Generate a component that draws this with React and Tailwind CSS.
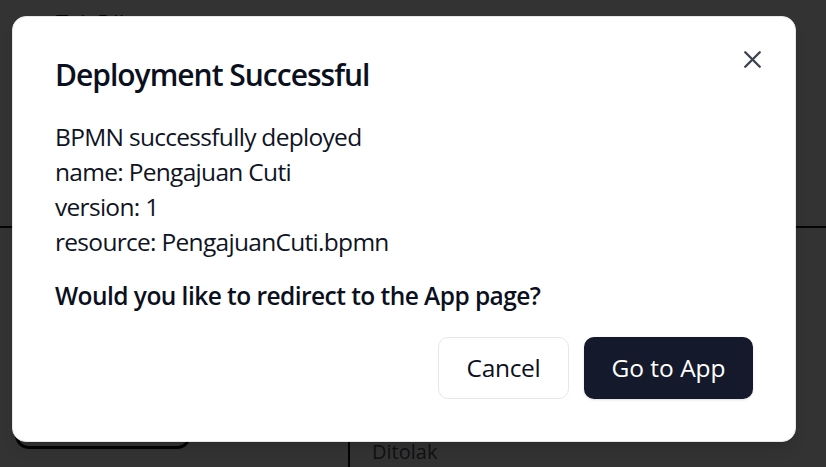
import React from "react";

function XIcon({ className }) {
  return (
    <svg viewBox="0 0 24 24" fill="none" stroke="currentColor" strokeWidth="2" strokeLinecap="round" strokeLinejoin="round" className={className}>
      <path d="M18 6 6 18" />
      <path d="m6 6 12 12" />
    </svg>
  );
}

export default function App() {
  return (
    <div className="relative h-[467px] w-[826px] overflow-hidden bg-white font-['Open_Sans','Noto_Sans',sans-serif]">
      {/* underlying page */}
      <div className="flex h-full flex-col">
        <div className="h-[20px] pl-[56px] pt-[10px]">
          <div className="text-[22px] leading-[24px] text-[#111]">Tgl. Dibuat</div>
        </div>
        <div className="h-[208px] border-b-2 border-[#222]" />
        <div className="flex flex-1 items-end">
          <div className="mb-[18px] ml-[15px] h-[80px] w-[176px] rounded-b-[14px] border-[3px] border-[#111]" />
          <div className="ml-[157px] h-[60px] border-l-2 border-[#111] pl-[22px] pt-[33px] text-[20px] leading-[24px] text-[#555]">
            Ditolak
          </div>
        </div>
      </div>

      {/* overlay */}
      <div className="absolute inset-0 bg-black/80" />

      {/* dialog */}
      <div className="absolute left-[12px] top-[16px] flex w-[784px] flex-col rounded-[14px] border border-[#e5e7eb] bg-white p-[42px] pb-[42px] shadow-lg">
        <button className="absolute right-[28px] top-[28px] text-[#3f4451]">
          <XIcon className="h-[29px] w-[29px]" />
        </button>
        <h2 className="pt-[1px] text-[30px] font-semibold leading-[30px] tracking-[-1px] text-[#0b1020]">
          Deployment Successful
        </h2>
        <div className="mt-[29px] text-[24.5px] leading-[35px] tracking-[-0.7px] text-[#0f1424]">
          <div>BPMN successfully deployed</div>
          <div>name: Pengajuan Cuti</div>
          <div>version: 1</div>
          <div>resource: PengajuanCuti.bpmn</div>
        </div>
        <div className="mt-[19px] text-[24.5px] font-semibold leading-[35px] tracking-[-0.55px] text-[#0b1020]">
          Would you like to redirect to the App page?
        </div>
        <div className="mt-[24px] flex justify-end gap-[15px]">
          <button className="h-[62px] w-[131px] rounded-[10px] border border-[#e5e7eb] bg-white text-[24.5px] font-medium tracking-[-0.3px] text-[#0b1020]">
            Cancel
          </button>
          <button className="h-[62px] w-[169px] rounded-[10px] bg-[#141a2b] text-[24.5px] font-medium text-white shadow">
            Go to App
          </button>
        </div>
      </div>
    </div>
  );
}
